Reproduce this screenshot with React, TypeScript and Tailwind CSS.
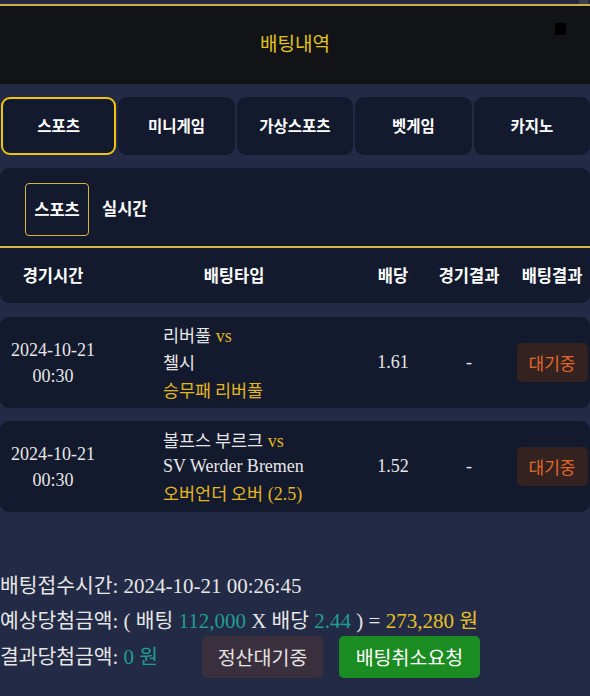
import React from "react";

const SERIF = "font-['Liberation_Serif','Noto_Sans_CJK_KR',serif]";
const SANS = "font-['Noto_Sans_CJK_KR','Noto_Sans',sans-serif]";

function K({ children, className = "" }: { children: React.ReactNode; className?: string }) {
  return <span className={`${SANS} text-[0.97em] ${className}`}>{children}</span>;
}

const tabs = ["스포츠", "미니게임", "가상스포츠", "벳게임", "카지노"];

type Row = {
  date: string;
  time: string;
  home: string;
  away: React.ReactNode;
  pick: React.ReactNode;
  odds: string;
};

const rows: Row[] = [
  {
    date: "2024-10-21",
    time: "00:30",
    home: "리버풀",
    away: <K>첼시</K>,
    pick: <K>승무패 리버풀</K>,
    odds: "1.61",
  },
  {
    date: "2024-10-21",
    time: "00:30",
    home: "볼프스 부르크",
    away: <span>SV Werder Bremen</span>,
    pick: (
      <>
        <K>오버언더 오버</K> (2.5)
      </>
    ),
    odds: "1.52",
  },
];

export default function App() {
  return (
    <div className={`relative w-[590px] h-[696px] overflow-hidden bg-[#232a45] ${SANS}`}>
      {/* scrollbar overlay */}
      <div className="absolute right-[2px] top-0 w-[9px] h-[45px] rounded-b-full bg-[#3d4152]" />

      {/* header */}
      <div className="pt-[4px]">
        <div className="relative h-[80px] border-t-2 border-[#cdb03e] bg-[#121317] flex items-center justify-center">
          <span className="text-[19px] text-[#e3c41d] -mt-[4px]">배팅내역</span>
          <div className="absolute left-[555px] top-[17px] w-[11px] h-[12px] bg-black" />
        </div>
      </div>

      {/* main tabs */}
      <div className="mt-[13px] grid grid-cols-5 gap-[2px]">
        {tabs.map((t, i) => (
          <div
            key={t}
            className={`h-[58px] rounded-[9px] bg-[#141a2e] flex items-center justify-center text-[15.5px] font-bold text-white ${
              i === 0 ? "border-2 border-[#f1c40f] ml-[1px]" : ""
            }`}
          >
            {t}
          </div>
        ))}
      </div>

      {/* sub panel + header */}
      <div className="mt-[13px] rounded-[9px] bg-[#131a2e]">
        <div className="h-[78px] flex items-center pl-[25px] gap-[13px]">
          <div className="w-[64px] h-[53px] mt-[5px] rounded-[4px] border-[1.5px] border-[#d8b43c] flex items-center justify-center text-[16.5px] font-bold text-white">
            스포츠
          </div>
          <span className="text-[16.5px] font-bold text-white mt-[2px]">실시간</span>
        </div>
        <div className="h-[2px] bg-[#d9b542]" />
        <div className="h-[55px] grid grid-cols-[106px_256px_62px_90px_76px] items-center text-[16.5px] font-bold text-white text-center">
          <span>경기시간</span>
          <span>배팅타입</span>
          <span>배당</span>
          <span>경기결과</span>
          <span>배팅결과</span>
        </div>
      </div>

      {/* rows */}
      <div className="mt-[14px] flex flex-col gap-[13px]">
        {rows.map((r, i) => (
          <div
            key={i}
            className={`h-[91px] rounded-[9px] bg-[#131a2e] grid grid-cols-[106px_256px_62px_90px_76px] items-center text-[18px] text-[#e6e6e6] ${SERIF}`}
          >
            <div className="text-center leading-[26px] mt-[1px]">
              <div>{r.date}</div>
              <div>{r.time}</div>
            </div>
            <div className="flex justify-center">
              <div className="text-left leading-[25.5px] w-[142px] whitespace-nowrap mt-[1px]">
                <div>
                  <K>{r.home}</K> <span className="text-[#e0b424]">vs</span>
                </div>
                <div>{r.away}</div>
                <div className="text-[#e4b622]">{r.pick}</div>
              </div>
            </div>
            <div className="text-center">{r.odds}</div>
            <div className="text-center">-</div>
            <div className="flex justify-center">
              <div className="w-[71px] h-[39px] rounded-[5px] bg-[#33221f] flex items-center justify-center text-[#e3692b] text-[17px] font-['Noto_Sans_CJK_KR',sans-serif]">
                대기중
              </div>
            </div>
          </div>
        ))}
      </div>

      {/* summary */}
      <div className={`mt-[56px] text-[21px] text-[#e6e6e6] ${SERIF}`}>
        <div className="h-[35px] flex items-center whitespace-nowrap">
          <span>
            <K>배팅접수시간</K>: 2024-10-21 00:26:45
          </span>
        </div>
        <div className="h-[35px] flex items-center whitespace-nowrap">
          <span>
            <K>예상당첨금액</K>: ( <K>배팅</K> <span className="text-[#1f9e92]">112,000</span> X <K>배당</K>{" "}
            <span className="text-[#1f9e92]">2.44</span> ) ={" "}
            <span className="text-[#e6c126]">
              273,280 <K>원</K>
            </span>
          </span>
        </div>
        <div className="flex items-center whitespace-nowrap -mt-[2px]">
          <span className="w-[202px]">
            <K>결과당첨금액</K>: <span className="text-[#1f9e92]">0 <K>원</K></span>
          </span>
          <div className="w-[121px] h-[42px] rounded-[5px] bg-[#3a2f3c] flex items-center justify-center text-[19.5px] text-[#e4e4e4] font-['Noto_Sans_CJK_KR',sans-serif]">
            정산대기중
          </div>
          <div className="ml-[16px] w-[141px] h-[42px] rounded-[5px] bg-[#1b8c22] flex items-center justify-center text-[19.5px] text-white font-['Noto_Sans_CJK_KR',sans-serif]">
            배팅취소요청
          </div>
        </div>
      </div>
    </div>
  );
}
